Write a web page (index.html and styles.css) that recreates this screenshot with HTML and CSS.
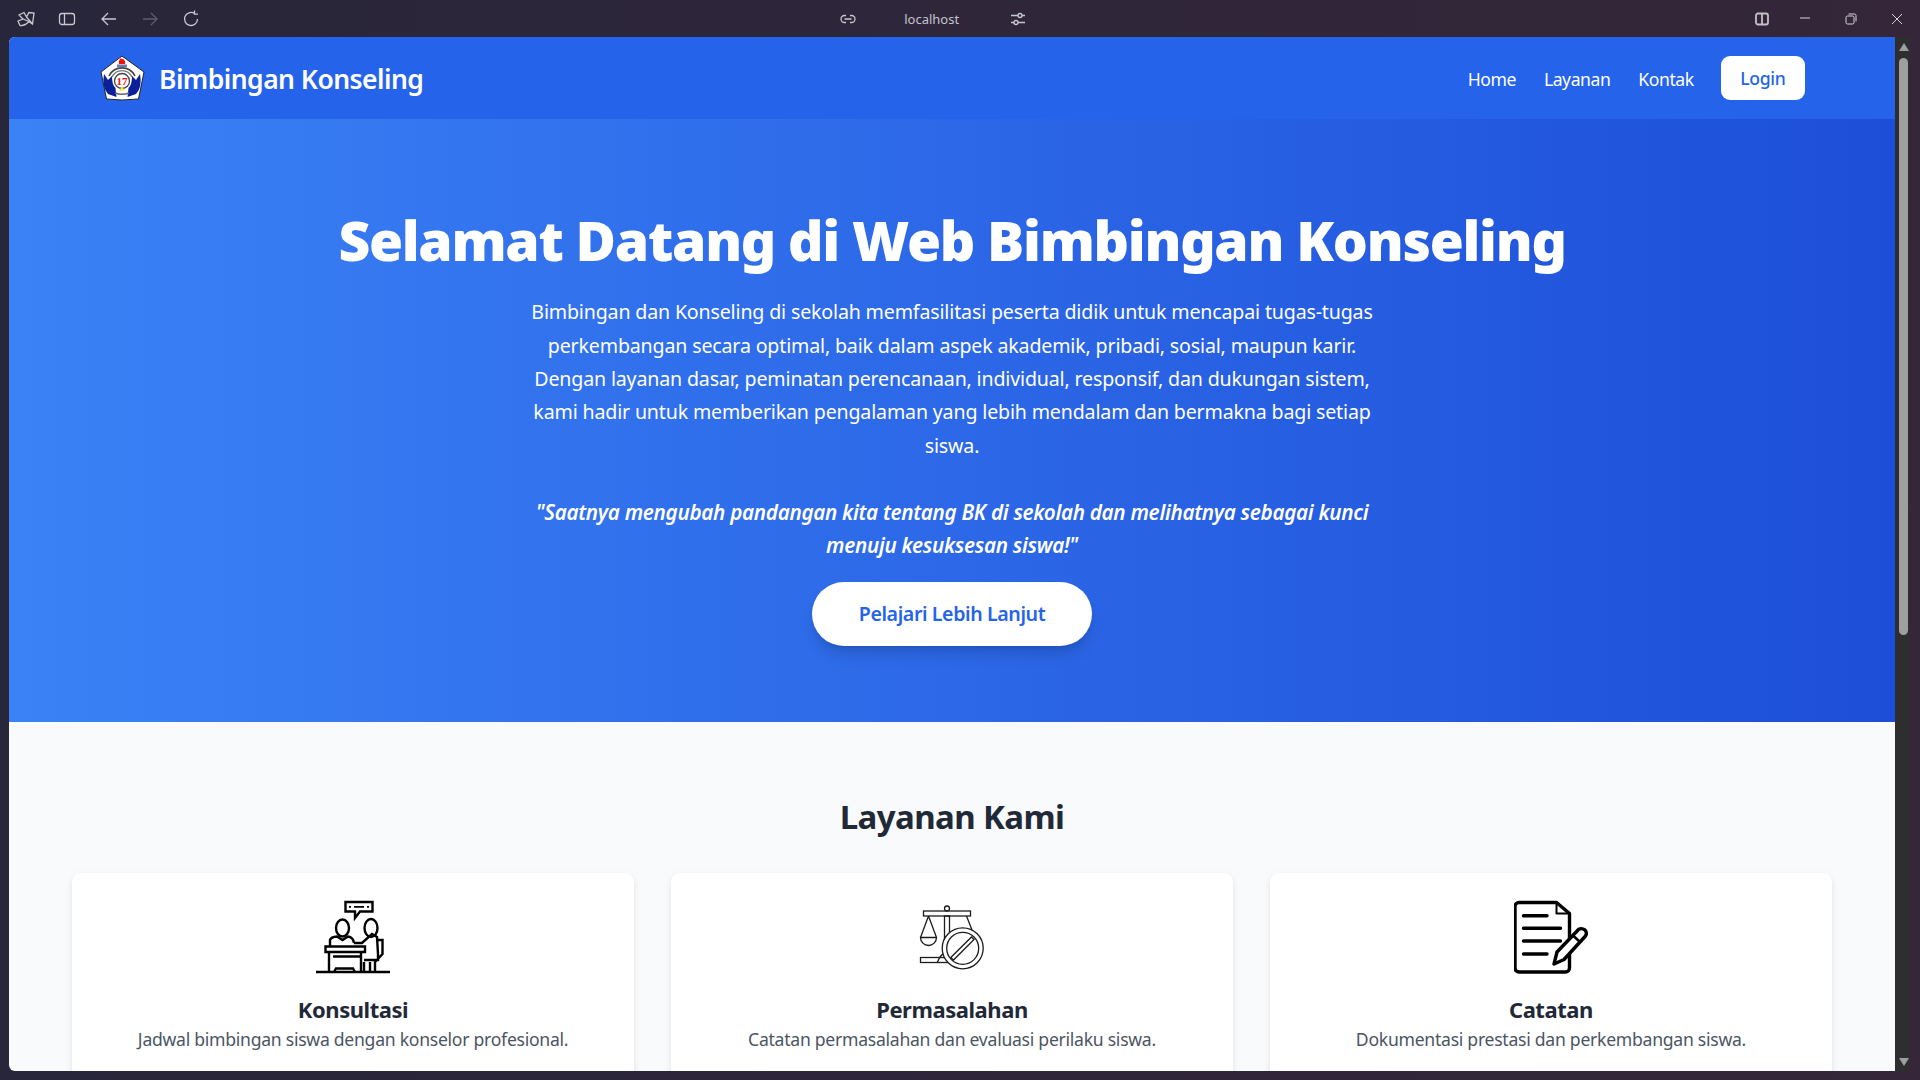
FILE: index.html
```html
<!DOCTYPE html>
<html lang="id">
<head>
<meta charset="utf-8">
<title>Bimbingan Konseling</title>
<link rel="stylesheet" href="styles.css">
</head>
<body>
<div class="titlebar">
  <div class="tb-left">
    <svg class="tb-icon" viewBox="0 0 20 20"><path d="M3 6 L8 3.500 L10.500 8 L13 3.500 L18 4 L16.500 15 L13 12.500 Q9 17 4 16.500 L2 12 L7 10 Z M7 10 L13 12.500 M10.500 8 L16.500 15"/></svg>
    <svg class="tb-icon" viewBox="0 0 20 20"><rect x="2.500" y="4.500" width="15" height="11" rx="2.500"/><path d="M7.500 4.500 V15.500"/></svg>
    <svg class="tb-icon" viewBox="0 0 20 20"><path d="M17 10 H3 M9 4 L3 10 L9 16"/></svg>
    <svg class="tb-icon tb-dim" viewBox="0 0 20 20"><path d="M3 10 H17 M11 4 L17 10 L11 16"/></svg>
    <svg class="tb-icon" viewBox="0 0 20 20"><path d="M16.500 10 A6.500 6.500 0 1 1 13.500 4.500 M13.500 1.500 V5.200 H17"/></svg>
  </div>
  <div class="tb-center">
    <svg class="tb-icon" viewBox="0 0 20 20"><path d="M8 6.500 H6.500 A3.500 3.500 0 0 0 6.500 13.500 H8 M12 6.500 H13.500 A3.500 3.500 0 0 1 13.500 13.500 H12 M6.500 10 H13.500"/></svg>
    <span class="tb-url">localhost</span>
    <svg class="tb-icon" viewBox="0 0 20 20"><path d="M3 6.500 H10 M14 6.500 H17 M3 13.500 H6 M10 13.500 H17"/><circle cx="12" cy="6.500" r="2"/><circle cx="8" cy="13.500" r="2"/></svg>
  </div>
  <div class="tb-right">
    <svg class="tb-icon tb-split" viewBox="0 0 20 20"><rect x="4" y="4.500" width="12" height="11" rx="2"/><path d="M10 4.500 V15.500"/></svg>
    <svg class="tb-icon tb-thin" viewBox="0 0 20 20"><path d="M5 9 H15"/></svg>
    <svg class="tb-icon tb-thin" viewBox="0 0 20 20"><rect x="5" y="7" width="8" height="8" rx="1.500"/><path d="M7.500 5 H13.500 A1.500 1.500 0 0 1 15 6.500 V12.500"/></svg>
    <svg class="tb-icon tb-thin" viewBox="0 0 20 20"><path d="M5 5 L15 15 M15 5 L5 15"/></svg>
  </div>
</div>
<div class="frame">
  <main class="viewport">
    <nav class="nav">
      <div class="brand">
        <svg class="logo" viewBox="0 0 46 46">
          <path d="M22 1 L44 17 L38.500 44 Q22 46 6.500 44 L1 17 Z" fill="#fff" stroke="#222" stroke-width="1" stroke-linejoin="round"/>
          <path d="M19 9 Q18 6 21 3 Q22 5 23 4 Q26 6 25 9 Z" fill="#e11"/>
          <path d="M17 9.500 H27 V12 H17 Z" fill="#6a7ab0"/>
          <path d="M9 21 A14.500 14.500 0 0 1 35 21" fill="none" stroke="#444" stroke-width="1.600"/>
          <path d="M12 22 A11 11 0 0 1 32 22" fill="none" stroke="#777" stroke-width="1.400"/>
          <path d="M4 19 Q1.500 32 8 39 L16.500 42 L15.500 33 Q12 30 12 21 L8 25 Z" fill="#0a1f9a"/>
          <path d="M40 19 Q42.500 32 36 39 L27.500 42 L28.500 33 Q32 30 32 21 L36 25 Z" fill="#0a1f9a"/>
          <circle cx="22" cy="26" r="7.500" fill="#fff" stroke="#444" stroke-width="1.300"/>
          <text class="logo-num" x="22" y="30">17</text>
          <path d="M22 31.500 L25 35.500 H19 Z" fill="#f5e03a"/>
          <path d="M15 38 Q22 40.500 29 38" fill="none" stroke="#666" stroke-width="1.500"/>
        </svg>
        <span class="brand-name">Bimbingan Konseling</span>
      </div>
      <div class="nav-links">
        <a class="nav-link">Home</a>
        <a class="nav-link">Layanan</a>
        <a class="nav-link">Kontak</a>
        <a class="login">Login</a>
      </div>
    </nav>
    <section class="hero">
      <h1 class="hero-title">Selamat Datang di Web Bimbingan Konseling</h1>
      <p class="hero-text">Bimbingan dan Konseling di sekolah memfasilitasi peserta didik untuk mencapai tugas-tugas perkembangan secara optimal, baik dalam aspek akademik, pribadi, sosial, maupun karir. Dengan layanan dasar, peminatan perencanaan, individual, responsif, dan dukungan sistem, kami hadir untuk memberikan pengalaman yang lebih mendalam dan bermakna bagi setiap siswa.</p>
      <p class="hero-quote">"Saatnya mengubah pandangan kita tentang BK di sekolah dan melihatnya sebagai kunci menuju kesuksesan siswa!"</p>
      <a class="cta">Pelajari Lebih Lanjut</a>
    </section>
    <section class="services">
      <h2 class="services-title">Layanan Kami</h2>
      <div class="cards">
        <article class="card">
          <svg class="card-icon icon-a" viewBox="16 10 74 74">
            <path d="M45.500 12 H72.500 V21.500 H60 L55 28 V21.500 H45.500 Z"/>
            <path class="d" d="M49 16.800 H51 M54 16.800 H64 M67 16.800 H69"/>
            <ellipse cx="42.500" cy="38" rx="6.500" ry="8.500"/>
            <ellipse cx="71" cy="38" rx="6.500" ry="9"/>
            <path d="M30 56 V50 Q31 47 37 46.500 L42.500 50 L48 46.500 Q53 47 54 53"/>
            <path d="M25.500 56.500 H65 V62 H25.500 Z"/>
            <path d="M29 62 V82 M61 62 V82 M33 66.500 H61"/>
            <path d="M34 82 L36 78.500 H53 L55 82"/>
            <path d="M54 53 H62 L72 44 L77 47 L78 64 V70 H64 M78 50 H82.500 V64 L75 72 V82 M64 72 V82 M70 72 V82"/>
            <path class="floor" d="M16 82 H90"/>
          </svg>
          <h3 class="card-title">Konsultasi</h3>
          <p class="card-text">Jadwal bimbingan siswa dengan konselor profesional.</p>
        </article>
        <article class="card">
          <svg class="card-icon icon-b" viewBox="15 10 74 74">
            <circle cx="47" cy="18.500" r="2.500"/>
            <rect x="44.500" y="26" width="5" height="42"/>
            <rect x="23.500" y="21" width="47" height="5"/>
            <path d="M28.500 26 L20.500 47.500 M28.500 26 L36.500 47.500 M20.500 47.500 H36.500 A8 8 0 0 1 20.500 47.500 Z"/>
            <path d="M66.500 26 L72 40"/>
            <path d="M37 73 Q41 63 47 62"/>
            <rect x="20.500" y="67.500" width="27" height="5"/>
            <circle class="w" cx="62.700" cy="58.300" r="20.500"/>
            <circle cx="62.700" cy="58.300" r="16"/>
            <path class="w" d="M50.800 67.500 L71.500 47 L74 49.500 L53.500 70 Z"/>
          </svg>
          <h3 class="card-title">Permasalahan</h3>
          <p class="card-text">Catatan permasalahan dan evaluasi perilaku siswa.</p>
        </article>
        <article class="card">
          <svg class="card-icon icon-c" viewBox="14.500 10 74 74">
            <path d="M57 12.500 H19.500 A4 4 0 0 0 15.500 16.500 V78 A4 4 0 0 0 19.500 82 H66 A4 4 0 0 0 70 78 V23.500 Z"/>
            <path class="fold" d="M57 12.500 V23.500 H70"/>
            <path d="M24 25.700 H47.500 M24 38.300 H61 M24 51 H61 M24 64 H47.500"/>
            <path class="pen" d="M54.500 74 L57.500 62 L79 39.500 Q82 37.500 85.500 40 Q88 43 86 46 L64.500 69.500 Z"/>
            <path class="pen-line" d="M73.500 45.500 L80.500 52"/>
          </svg>
          <h3 class="card-title">Catatan</h3>
          <p class="card-text">Dokumentasi prestasi dan perkembangan siswa.</p>
        </article>
      </div>
    </section>
  </main>
  <div class="scrollbar">
    <span class="arrow arrow-up"></span>
    <span class="thumb"></span>
    <span class="arrow arrow-down"></span>
  </div>
</div>
</body>
</html>
```

FILE: styles.css
```css
* { box-sizing: border-box; margin: 0; padding: 0; }
html, body { height: 100%; overflow: hidden; }
body {
  display: flex;
  flex-direction: column;
  background: linear-gradient(90deg, #28263a 0%, #352639 100%);
  font-family: "Noto Sans", "Open Sans", sans-serif;
}
.titlebar { height: 37px; flex: none; display: flex; align-items: center; }
.tb-icon { width: 20px; height: 20px; fill: none; stroke: #c9c8d2; stroke-width: 1.3; flex: none; }
.tb-dim { stroke: #5e5c6c; }
.tb-left { display: flex; gap: 21.300px; padding-left: 16px; }
.tb-center { display: flex; align-items: center; gap: 45px; margin-left: 637px; }
.tb-url { font-size: 13px; color: #c5c3d0; width: 60px; text-align: center; text-indent: -3px; }
.tb-right { display: flex; gap: 26px; margin-left: auto; padding-right: 13px; }
.tb-split { stroke-width: 1.8; stroke: #c4c0c8; margin-right: -3px; }
.tb-thin { stroke-width: 1; stroke: #d6d4da; }
.frame { flex: 1; min-height: 0; display: flex; padding: 0 10px 9px 9px; }
.viewport {
  flex: 1;
  min-width: 0;
  overflow: hidden;
  background: #f9fafb;
  border-radius: 6px 0 0 6px;
}
.nav {
  height: 82px;
  background: #2563eb;
  display: flex;
  align-items: center;
  justify-content: space-between;
  padding: 0 90px 0 91px;
  color: #fff;
}
.brand { display: flex; align-items: center; gap: 13px; }
.logo { width: 46px; height: 46px; }
.logo-num { font-size: 11px; font-weight: 700; fill: #e11; text-anchor: middle; font-family: "Liberation Serif", serif; }
.brand-name { font-size: 26.500px; font-weight: 600; letter-spacing: -0.55px; padding-top: 2px; }
.nav-links { display: flex; align-items: center; gap: 28px; font-size: 17.600px; }
.nav-link { color: #fff; letter-spacing: -0.45px; padding-top: 2px; }
.login {
  background: #fff;
  color: #2563eb;
  font-weight: 500;
  height: 44px;
  margin-left: -1px;
  padding: 0 19.500px;
  display: flex;
  align-items: center;
  border-radius: 9px;
  letter-spacing: -0.3px;
}
.hero {
  height: 603px;
  background: linear-gradient(90deg, #3b82f6, #1d4ed8);
  color: #fff;
  display: flex;
  flex-direction: column;
  align-items: center;
  text-align: center;
  padding-top: 93px;
}
.hero-title { font-size: 55.200px; font-weight: 900; line-height: 1; letter-spacing: -1.28px; }
.hero-text { width: 860px; margin-top: 28px; font-size: 19.600px; line-height: 33.400px; letter-spacing: -0.16px; }
.hero-quote { width: 860px; margin-top: 33.400px; font-size: 20.700px; line-height: 33.400px; font-weight: 600; font-style: italic; letter-spacing: -0.31px; }
.cta {
  margin-top: 19.500px;
  width: 280px;
  height: 64px;
  background: #fff;
  color: #2563eb;
  border-radius: 32px;
  display: flex;
  align-items: center;
  justify-content: center;
  font-size: 19.600px;
  font-weight: 600;
  letter-spacing: -0.4px;
  box-shadow: 0 10px 15px -3px rgba(0,0,0,.15), 0 4px 6px -4px rgba(0,0,0,.15);
}
.services { padding: 72px 63px 0; }
.services-title { font-size: 33px; line-height: 46px; font-weight: 700; color: #1f2937; text-align: center; letter-spacing: -0.6px; }
.cards { display: grid; grid-template-columns: repeat(3, 1fr); gap: 36.800px; margin-top: 33px; }
.card {
  background: #fff;
  border-radius: 9px;
  padding-top: 27px;
  height: 240px;
  text-align: center;
  box-shadow: 0 4px 6px -1px rgba(0,0,0,.08), 0 2px 10px rgba(0,0,0,.05);
}
.card-icon { width: 74px; height: 74px; display: block; margin: 0 auto; fill: none; stroke: #000; }
.icon-a { stroke-width: 2.400; }
.icon-a .d { stroke-width: 1.800; }
.icon-a .floor { stroke-width: 2.600; }
.icon-b { stroke: #1c1c1c; stroke-width: 1.300; }
.icon-b .w { fill: #fff; }
.icon-c { stroke-width: 3.400; stroke-linecap: round; stroke-linejoin: round; }
.icon-c .fold { stroke-width: 2; }
.icon-c .pen { fill: #fff; }
.icon-c .pen-line { stroke-width: 2.500; }
.card-title { margin-top: 20px; font-size: 22px; line-height: 30px; font-weight: 700; color: #1f2937; letter-spacing: -0.45px; }
.card-text { font-size: 17.600px; line-height: 27px; margin-top: 2px; color: #4b5563; letter-spacing: -0.27px; }
.scrollbar {
  width: 15px;
  flex: none;
  background: #2e2e2e;
  display: flex;
  flex-direction: column;
  align-items: center;
  padding: 6px 0 5px 2px;
}
.arrow { width: 0; height: 0; border-left: 5.500px solid transparent; border-right: 5.500px solid transparent; flex: none; }
.arrow-up { border-bottom: 8px solid #9f9f9f; }
.arrow-down { border-top: 8px solid #9f9f9f; margin-top: auto; }
.thumb { width: 9px; height: 577px; margin-top: 7px; background: #9f9f9f; border-radius: 5px; flex: none; }
```
